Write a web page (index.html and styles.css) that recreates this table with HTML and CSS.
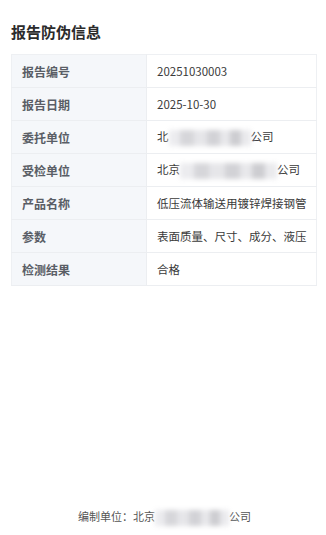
FILE: index.html
```html
<!DOCTYPE html>
<html lang="zh-CN">
<head>
<meta charset="utf-8">
<title>报告防伪信息</title>
<link rel="stylesheet" href="styles.css">
</head>
<body>
<div class="page">
  <h1 class="title">报告防伪信息</h1>
  <table class="info">
    <tr><th>报告编号</th><td>20251030003</td></tr>
    <tr><th>报告日期</th><td>2025-10-30</td></tr>
    <tr><th>委托单位</th><td>北<span class="mask mask-a"></span>公司</td></tr>
    <tr><th>受检单位</th><td>北京<span class="mask mask-b"></span>公司</td></tr>
    <tr><th>产品名称</th><td>低压流体输送用镀锌焊接钢管</td></tr>
    <tr><th>参数</th><td>表面质量、尺寸、成分、液压</td></tr>
    <tr><th>检测结果</th><td>合格</td></tr>
  </table>
  <footer class="footer">编制单位：北京<span class="mask mask-c"></span>公司</footer>
</div>
</body>
</html>
```
FILE: styles.css
```css
html, body {
  margin: 0;
  padding: 0;
  background: #ffffff;
}

body {
  font-family: "Noto Sans CJK SC", "Noto Sans", sans-serif;
  color: #333333;
}

.page {
  display: flex;
  flex-direction: column;
  min-height: 535px;
  box-sizing: border-box;
  padding: 21px 8px 0 11px;
}

.title {
  margin: 0 0 11px 0;
  font-size: 15px;
  line-height: 22px;
  font-weight: 700;
  color: #2b2b2b;
}

.info {
  width: 306px;
  border-collapse: collapse;
  font-size: 12px;
  border: 1px solid #eef0f3;
}

.info tr {
  height: 33px;
  border-bottom: 1px solid #eceef1;
}

.info th {
  width: 124px;
  padding: 0 0 0 10px;
  text-align: left;
  font-weight: 600;
  color: #5a5e66;
  background: #f5f7fa;
  border-right: 1px solid #eceef1;
}

.info td {
  padding: 0 0 0 10px;
  font-size: 11.5px;
  color: #3a3a3a;
  white-space: nowrap;
}

.mask {
  display: inline-block;
  vertical-align: middle;
  height: 16px;
  filter: blur(2.5px);
  background:
    linear-gradient(90deg,
      #ececef 0 14%, #d6d6da 14% 30%, #e6e6e9 30% 46%,
      #d2d2d6 46% 62%, #e8e8eb 62% 74%, #cdcdd1 74% 88%, #eaeaed 88% 100%);
}

.mask-a { width: 82px; }
.mask-b { width: 97px; }
.mask-c { width: 74px; }

.footer {
  margin-top: auto;
  padding-bottom: 9px;
  text-align: center;
  font-size: 11px;
  line-height: 16px;
  color: #555555;
}
```
